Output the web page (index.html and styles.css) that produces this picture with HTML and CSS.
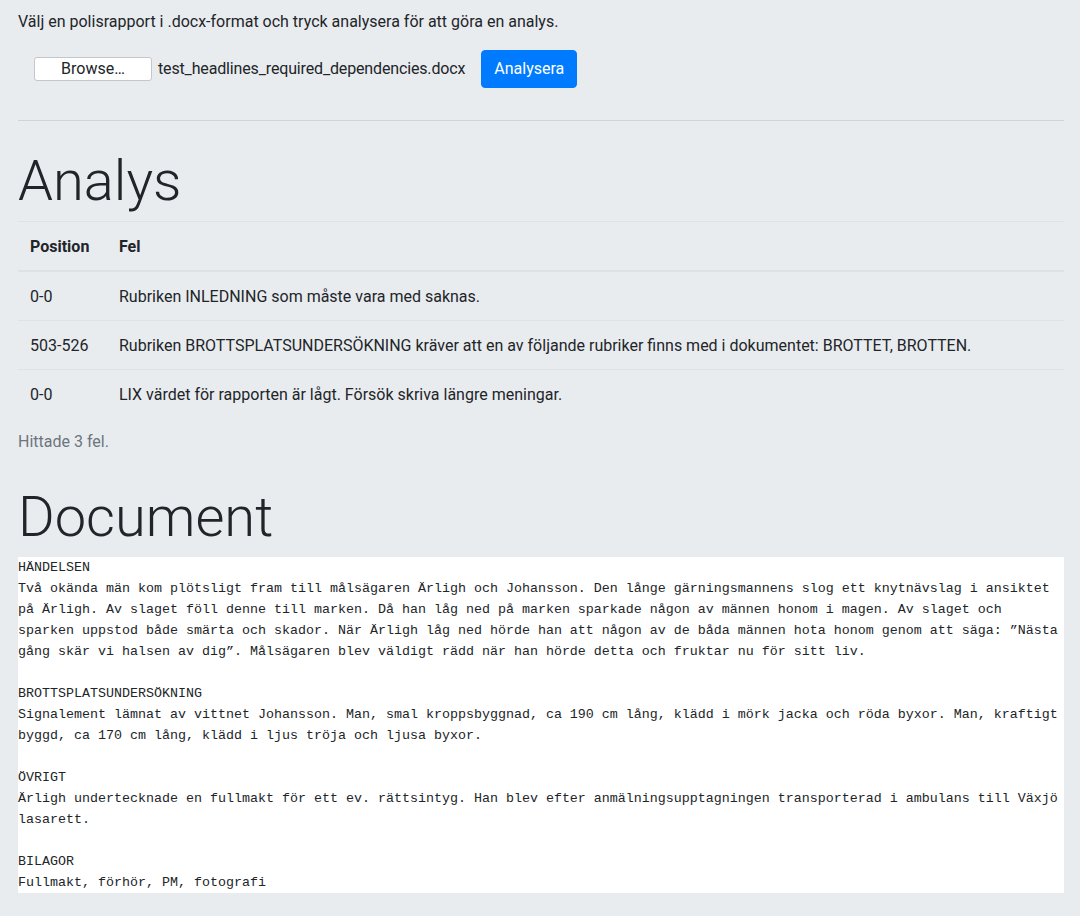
FILE: index.html
```html
<!DOCTYPE html>
<html lang="sv">
<head>
<meta charset="utf-8">
<title>Analys</title>
<link rel="stylesheet" href="styles.css">
</head>
<body>
<main class="page">
  <p class="intro">Välj en polisrapport i .docx-format och tryck analysera för att göra en analys.</p>
  <form class="upload">
    <span class="file-btn">Browse…</span>
    <span class="file-name">test_headlines_required_dependencies.docx</span>
    <button type="button" class="btn-primary">Analysera</button>
  </form>
  <hr class="divider">
  <h1 class="display">Analys</h1>
  <table class="table">
    <colgroup>
      <col class="col-pos">
      <col>
    </colgroup>
    <thead>
      <tr><th>Position</th><th>Fel</th></tr>
    </thead>
    <tbody>
      <tr><td>0-0</td><td>Rubriken INLEDNING som måste vara med saknas.</td></tr>
      <tr><td>503-526</td><td>Rubriken BROTTSPLATSUNDERSÖKNING kräver att en av följande rubriker finns med i dokumentet: BROTTET, BROTTEN.</td></tr>
      <tr><td>0-0</td><td>LIX värdet för rapporten är lågt. Försök skriva längre meningar.</td></tr>
    </tbody>
  </table>
  <p class="muted">Hittade 3 fel.</p>
  <h1 class="display display-doc">Document</h1>
  <pre class="doc">HÄNDELSEN
Två okända män kom plötsligt fram till målsägaren Ärligh och Johansson. Den långe gärningsmannens slog ett knytnävslag i ansiktet på Ärligh. Av slaget föll denne till marken. Då han låg ned på marken sparkade någon av männen honom i magen. Av slaget och sparken uppstod både smärta och skador. När Ärligh låg ned hörde han att någon av de båda männen hota honom genom att säga: ”Nästa gång skär vi halsen av dig”. Målsägaren blev väldigt rädd när han hörde detta och fruktar nu för sitt liv.

BROTTSPLATSUNDERSÖKNING
Signalement lämnat av vittnet Johansson. Man, smal kroppsbyggnad, ca 190 cm lång, klädd i mörk jacka och röda byxor. Man, kraftigt byggd, ca 170 cm lång, klädd i ljus tröja och ljusa byxor.

ÖVRIGT
Ärligh undertecknade en fullmakt för ett ev. rättsintyg. Han blev efter anmälningsupptagningen transporterad i ambulans till Växjö lasarett.

BILAGOR
Fullmakt, förhör, PM, fotografi</pre>
</main>
</body>
</html>
```

FILE: styles.css
```css
html, body {
  margin: 0;
  padding: 0;
  background: #e9ecef;
}

body {
  font-family: Roboto, "Liberation Sans", sans-serif;
  font-size: 16px;
  line-height: 24px;
  color: #212529;
}

.page {
  padding: 10px 16px 23px 18px;
}

.intro {
  margin: 0 0 16px;
}

.upload {
  display: flex;
  align-items: center;
  padding-left: 16px;
  height: 38px;
  margin: 0;
}

.file-btn {
  box-sizing: border-box;
  width: 118px;
  height: 24px;
  display: flex;
  align-items: center;
  justify-content: center;
  background: #fff;
  border: 1px solid #c3c7cb;
  border-radius: 3px;
  color: #212529;
  font-size: 16px;
}

.file-name {
  margin-left: 6px;
  margin-right: 16px;
  letter-spacing: -0.15px;
}

.btn-primary {
  box-sizing: border-box;
  height: 38px;
  padding: 6px 12px;
  border: 1px solid #007bff;
  border-radius: 4px;
  background: #007bff;
  color: #fff;
  font-family: Roboto, "Liberation Sans", sans-serif;
  font-size: 16px;
  line-height: 24px;
}

.divider {
  margin: 32px 0 0;
  border: 0;
  border-top: 1px solid rgba(0, 0, 0, 0.1);
}

.display {
  font-size: 56px;
  font-weight: 300;
  line-height: 1.2;
  margin: 27px 0 6px;
}

.display-doc {
  margin: 30px 0 6px;
}

.table {
  width: 100%;
  border-collapse: collapse;
  table-layout: fixed;
  margin-bottom: 12px;
}

.col-pos {
  width: 89px;
}

.table th,
.table td {
  padding: 13px 12px 11px;
  text-align: left;
  vertical-align: top;
  border-top: 1px solid #dee2e6;
}

.table th {
  font-weight: 700;
}

.table thead th {
  border-bottom: 2px solid #dee2e6;
}

.muted {
  color: #6c757d;
  margin: 0;
}

.doc {
  margin: 0;
  background: #fff;
  font-family: "Liberation Mono", monospace;
  font-size: 13.33px;
  line-height: 21px;
  color: #212529;
  white-space: pre-wrap;
  word-wrap: break-word;
}
```
